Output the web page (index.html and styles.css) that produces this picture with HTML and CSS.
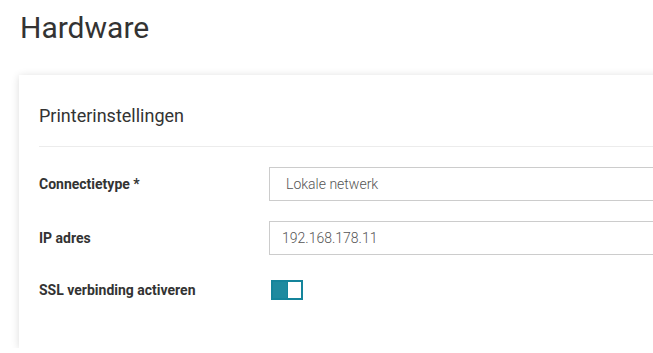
FILE: index.html
```html
<!DOCTYPE html>
<html lang="nl">
<head>
    <meta charset="UTF-8">
    <meta name="viewport" content="width=device-width, initial-scale=1.0">
    <title>Hardware</title>
    <link rel="stylesheet" href="styles.css">
</head>
<body>
    <h1 class="page-title">Hardware</h1>

    <div class="card">
        <div class="card-header">Printerinstellingen</div>
        <div class="card-body">
            <div class="form-row">
                <label class="form-label">Connectietype *</label>
                <div class="form-field select">Lokale netwerk</div>
            </div>
            <div class="form-row">
                <label class="form-label">IP adres</label>
                <div class="form-field">192.168.178.11</div>
            </div>
            <div class="form-row toggle-row">
                <label class="form-label">SSL verbinding activeren</label>
                <div class="toggle">
                    <span class="toggle-knob"></span>
                </div>
            </div>
        </div>
    </div>
</body>
</html>
```

FILE: styles.css
```css
body {
    margin: 0;
    padding: 10px 0 0 19px;
    background-color: #fff;
    color: #333;
    font-family: Roboto, "Liberation Sans", sans-serif;
    overflow: hidden;
}

.page-title {
    margin: 0 0 29px 1px;
    font-size: 30px;
    font-weight: 400;
    line-height: 36px;
    color: #333;
}

.card {
    width: 720px;
    padding: 0 20px 43px;
    background-color: #fff;
    box-shadow: 0 1px 8px rgba(0, 0, 0, 0.14);
}

.card-header {
    padding: 29px 0 18px;
    font-size: 18px;
    line-height: 24px;
    border-bottom: 1px solid #ececec;
}

.card-body {
    display: flex;
    flex-direction: column;
    gap: 20px;
    padding-top: 20px;
}

.form-row {
    display: flex;
    align-items: center;
}

.form-label {
    width: 230px;
    font-size: 14px;
    font-weight: 700;
    color: #333;
}

.form-field {
    flex: 1;
    height: 34px;
    box-sizing: border-box;
    padding: 0 12px;
    border: 1px solid #ccc;
    font-size: 14px;
    font-weight: 300;
    line-height: 32px;
    color: #555;
}

.form-field.select {
    padding-left: 16px;
}

.toggle-row {
    height: 30px;
}

.toggle {
    display: flex;
    width: 32px;
    height: 20px;
    margin-left: 2px;
    box-sizing: border-box;
    border: 2px solid #14849b;
    background-color: #fff;
}

.toggle-knob {
    width: 14px;
    background-color: #1e8a9f;
    border-right: 1px solid #14849b;
}
```
